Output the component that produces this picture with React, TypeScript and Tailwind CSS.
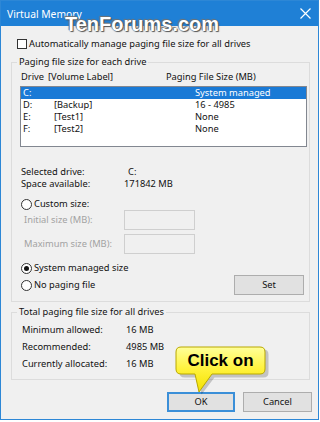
import { clsx } from 'clsx'

function Radio({ checked }: { checked?: boolean }) {
  return (
    <span className="w-[11px] h-[11px] rounded-full border border-[#333] bg-white flex items-center justify-center shrink-0">
      {checked && <span className="w-[5px] h-[5px] rounded-full bg-[#111]" />}
    </span>
  )
}

function Button({ label, focused, className }: { label: string; focused?: boolean; className?: string }) {
  return (
    <div
      className={clsx(
        'h-[20px] flex items-center justify-center bg-[#e1e1e1]',
        focused ? 'border-2 border-[#3b8fd8]' : 'border border-[#adadad]',
        className
      )}
    >
      {label}
    </div>
  )
}

const drives = [
  { d: 'C:', label: '', size: 'System managed', selected: true },
  { d: 'D:', label: '[Backup]', size: '16 - 4985' },
  { d: 'E:', label: '[Test1]', size: 'None' },
  { d: 'F:', label: '[Test2]', size: 'None' },
]

export default function App() {
  return (
    <div className="w-[320px] h-[422px] bg-white relative font-['Noto_Sans',sans-serif] text-[9.3px] leading-[12px] text-[#111] whitespace-nowrap">
      <div className="w-[319px] h-[420px] border border-[#2d87d6] bg-[#f0f0f0] flex flex-col">
        {/* title bar */}
        <div className="h-[25px] bg-[#1f80d6] flex items-center justify-between pl-[6px] pr-[7px] text-white shrink-0">
          <span className="text-[10.3px] leading-[14px]">Virtual Memory</span>
          <svg width="11" height="11" viewBox="0 0 11 11" stroke="white" strokeWidth="1.2">
            <path d="M0.5 0.5 L10.5 10.5 M10.5 0.5 L0.5 10.5" />
          </svg>
        </div>

        {/* auto manage */}
        <div className="flex items-center gap-[2px] pl-[16px] mt-[12px] h-[12px]">
          <span className="w-[10px] h-[10px] border border-[#333] bg-white shrink-0" />
          <span>Automatically manage paging file size for all drives</span>
        </div>

        {/* group 1 */}
        <fieldset className="ml-[10px] w-[299px] mt-[6px] border border-[#dcdcdc] pt-[3px] pb-[6px]">
          <legend className="ml-[5px] px-[2px] h-[12px]">Paging file size for each drive</legend>
          <div className="flex h-[12px] pl-[9px]">
            <span className="w-[27px] shrink-0">Drive</span>
            <span className="w-[118px] shrink-0">[Volume Label]</span>
            <span>Paging File Size (MB)</span>
          </div>
          <div className="ml-[8px] mt-[3px] w-[287px] h-[61px] border border-[#828790] bg-white">
            {drives.map((r) => (
              <div
                key={r.d}
                className={clsx('flex h-[12px] pl-[2px]', r.selected && 'bg-[#1a7ad6] text-white')}
              >
                <span className="w-[31px] shrink-0">{r.d}</span>
                <span className="w-[141px] shrink-0">{r.label}</span>
                <span>{r.size}</span>
              </div>
            ))}
          </div>

          <div className="pl-[9px] mt-[19px]">
            <div className="flex h-[12px]">
              <span className="w-[107px] shrink-0">Selected drive:</span>
              <span>C:</span>
            </div>
            <div className="flex h-[12px]">
              <span className="w-[103px] shrink-0">Space available:</span>
              <span>171842 MB</span>
            </div>
          </div>

          <div className="flex items-center gap-[2px] pl-[9px] mt-[8px] h-[12px]">
            <Radio />
            <span>Custom size:</span>
          </div>
          <div className="flex items-center h-[20px] pl-[12px] text-[#a2a2a2]">
            <span className="w-[100px] shrink-0">Initial size (MB):</span>
            <span className="w-[71px] h-[20px] border border-[#cfcfcf]" />
          </div>
          <div className="flex items-center h-[20px] pl-[12px] mt-[4px] text-[#a2a2a2]">
            <span className="w-[100px] shrink-0">Maximum size (MB):</span>
            <span className="w-[71px] h-[20px] border border-[#cfcfcf]" />
          </div>

          <div className="flex items-center gap-[2px] pl-[9px] mt-[8px] h-[12px]">
            <Radio checked />
            <span>System managed size</span>
          </div>
          <div className="flex items-center justify-between pl-[9px] pr-[5px] mt-[1px] h-[20px]">
            <div className="flex items-center gap-[2px]">
              <Radio />
              <span>No paging file</span>
            </div>
            <Button label="Set" className="w-[70px]" />
          </div>
        </fieldset>

        {/* group 2 */}
        <fieldset className="ml-[10px] w-[299px] mt-[4px] border border-[#dcdcdc] pt-[3px] pb-[7px]">
          <legend className="ml-[5px] px-[2px] h-[12px]">Total paging file size for all drives</legend>
          {[
            ['Minimum allowed:', '16 MB'],
            ['Recommended:', '4985 MB'],
            ['Currently allocated:', '16 MB'],
          ].map(([k, v]) => (
            <div key={k} className="flex items-center h-[17px] pl-[10px]">
              <span className="w-[104px] shrink-0">{k}</span>
              <span>{v}</span>
            </div>
          ))}
        </fieldset>

        {/* buttons */}
        <div className="flex justify-end gap-[8px] pr-[6px] mt-[12px]">
          <Button label="OK" focused className="w-[68px]" />
          <Button label="Cancel" className="w-[69px]" />
        </div>
      </div>

      {/* watermark */}
      <div className="absolute left-[65px] top-[13px] font-['Liberation_Sans',sans-serif] font-bold text-[20px] leading-[22px] text-white [text-shadow:0_0_1px_#444,1px_1px_1px_#555,-1px_-1px_1px_#777]">
        TenForums.com
      </div>

      {/* callout */}
      <div className="absolute left-[170px] top-[342px] w-[100px] h-[55px]">
        <svg width="100" height="55" viewBox="0 0 100 55" className="absolute inset-0">
          <defs>
            <linearGradient id="yg" x1="0" y1="0" x2="0" y2="1">
              <stop offset="0" stopColor="#ffff9a" />
              <stop offset="0.5" stopColor="#fff23a" />
              <stop offset="1" stopColor="#f3e100" />
            </linearGradient>
          </defs>
          <path
            d="M13 6 H92 Q97 6 97 11 V29 Q97 34 92 34 H43 L30 51 L26 34 H13 Q8 34 8 29 V11 Q8 6 13 6 Z"
            fill="#00000030"
            transform="translate(1.5 1.5)"
          />
          <path
            d="M11 5 H90 Q95 5 95 10 V27 Q95 32 90 32 H42 L29 50 L25 32 H11 Q6 32 6 27 V10 Q6 5 11 5 Z"
            fill="url(#yg)"
            stroke="#b9a800"
            strokeWidth="1"
          />
        </svg>
        <div className="absolute left-[6px] top-[5px] w-[89px] h-[27px] flex items-center justify-center font-['Liberation_Sans',sans-serif] font-bold text-[17px] text-black">
          Click on
        </div>
      </div>
    </div>
  )
}
